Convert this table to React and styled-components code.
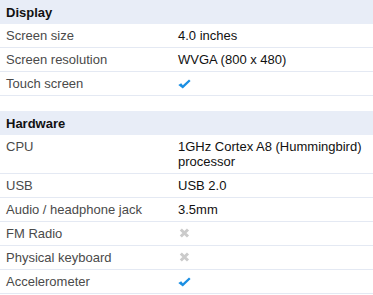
import React from 'react'
import styled, { createGlobalStyle } from 'styled-components'

const Global = createGlobalStyle`
body{margin:0;background:#fff;font-family:"Liberation Sans",Arial,sans-serif;}
`
const Page = styled.div`
width:373px;
display:flex;
flex-direction:column;
gap:15px;`
const Table = styled.div`
display:flex;
flex-direction:column;`
const Header = styled.div`
height:24px;
line-height:25px;
background-color:#e8edf7;
padding-left:6px;
font-size:13px;
font-weight:bold;
color:#111;`
const Row = styled.div`
display:grid;
grid-template-columns:178px 1fr;
border-bottom:1px solid #e4e9f3;
padding:4px 0;
font-size:13px;
line-height:15px;`
const Label = styled.div`
padding-left:6px;
color:#4a4a4a;`
const Value = styled.div`
color:#111;
padding-right:8px;`

const Check = () => (
    <svg width="13" height="10" viewBox="0 0 13 10" style={{display:'block',marginTop:3}}>
        <path d="M0.3 6 L3.2 4.3 L4.8 6.3 L11 0.6 L12.6 2 L4.8 9.6 Z" fill="#1b8fe3"/>
    </svg>
)
const Cross = () => (
    <svg width="11" height="10" viewBox="0 0 11 10" style={{display:'block',marginTop:2,marginLeft:1}}>
        <path d="M1.8 1.5 L9 8.5 M9 1.5 L1.8 8.5" stroke="#cbcbcb" strokeWidth="3"/>
    </svg>
)

const sections = [
    {title:'Display', rows:[
        ['Screen size','4.0 inches'],
        ['Screen resolution','WVGA (800 x 480)'],
        ['Touch screen',<Check/>],
    ]},
    {title:'Hardware', rows:[
        ['CPU','1GHz Cortex A8 (Hummingbird) processor'],
        ['USB','USB 2.0'],
        ['Audio / headphone jack','3.5mm'],
        ['FM Radio',<Cross/>],
        ['Physical keyboard',<Cross/>],
        ['Accelerometer',<Check/>],
    ]},
]

export const App = () => {
    return (
        <Page>
            <Global/>
            {sections.map(s=>(
                <Table key={s.title}>
                    <Header>{s.title}</Header>
                    {s.rows.map(([l,v])=>(
                        <Row key={l}>
                            <Label>{l}</Label>
                            <Value>{v}</Value>
                        </Row>
                    ))}
                </Table>
            ))}
        </Page>
    )
}
export default App;
